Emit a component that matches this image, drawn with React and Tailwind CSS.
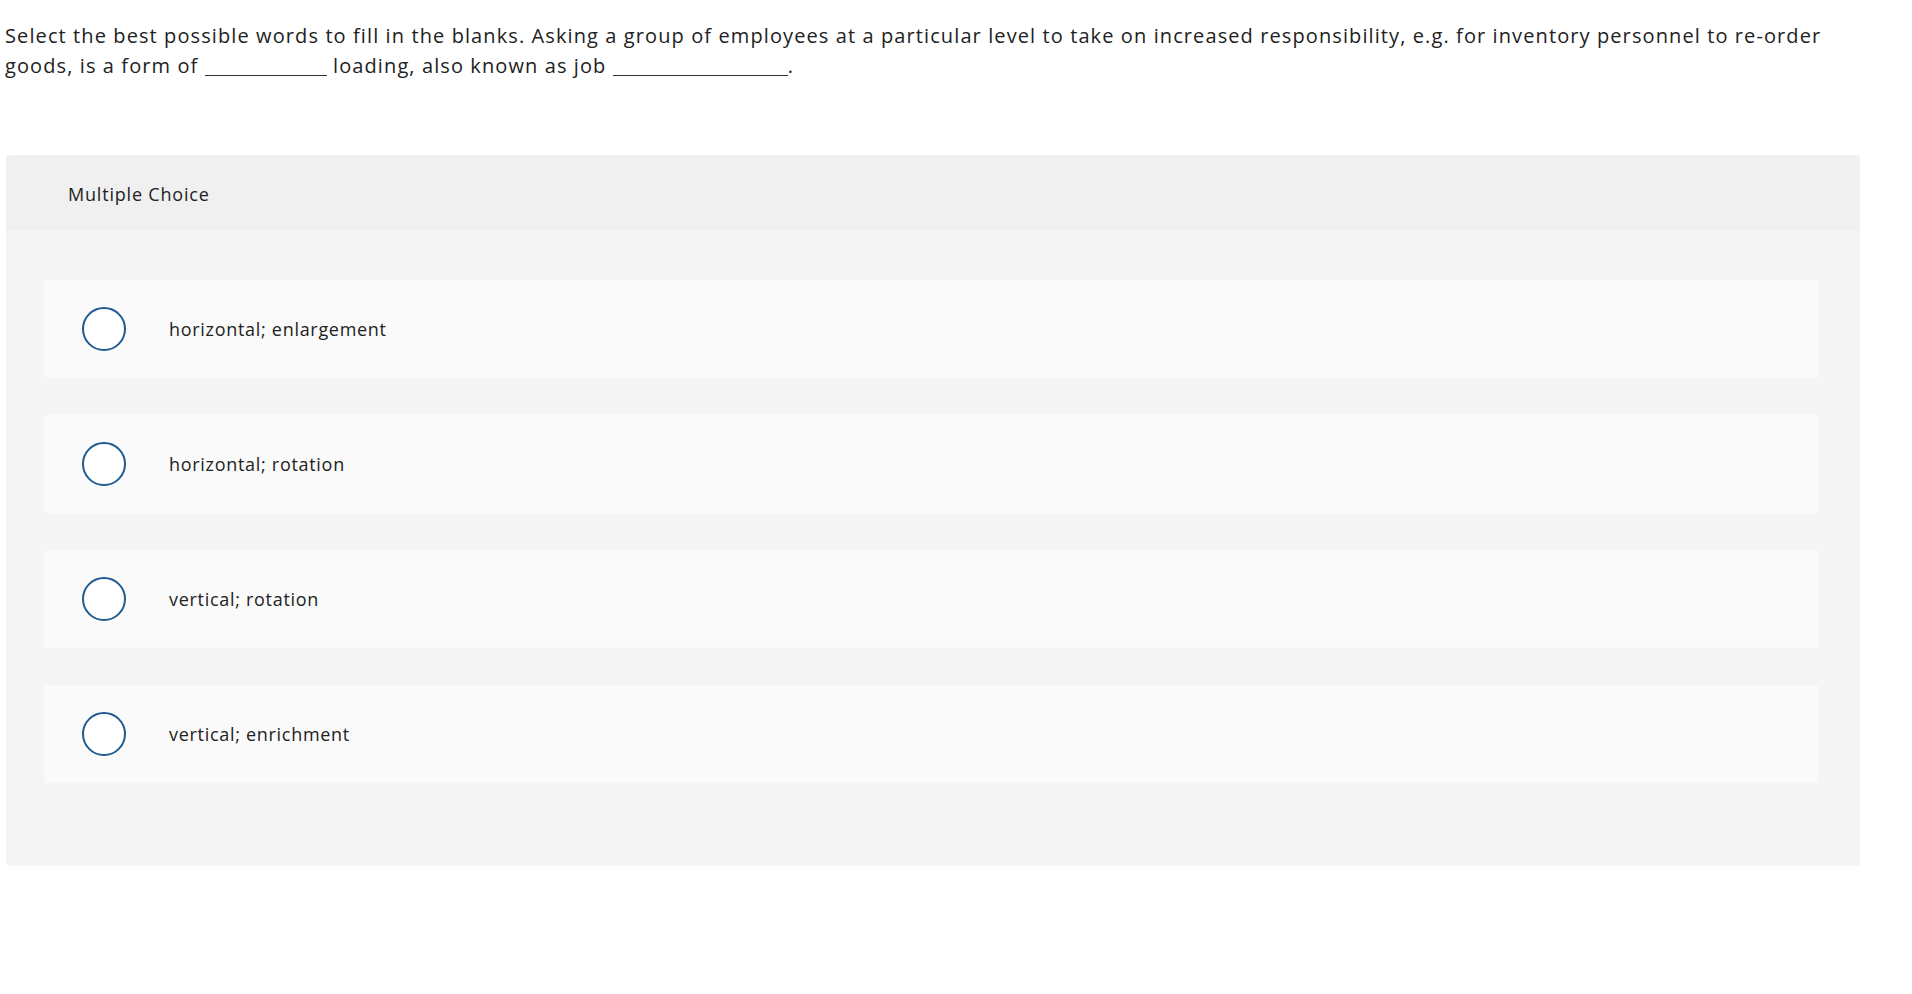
import React from 'react';

const options = [
  "horizontal; enlargement",
  "horizontal; rotation",
  "vertical; rotation",
  "vertical; enrichment",
];

const Blank = ({ width }) => (
  <span className={`inline-block h-px border-b border-[#333] align-[-3px] ${width}`} />
);

const App = () => {
  return (
    <div className="min-h-screen bg-white pt-[21px] pl-[5px] pr-[52px] text-[#222]" style={{ fontFamily: "'Open Sans', Lato, sans-serif" }}>
      <p className="text-[20px] leading-[30px] tracking-[1.1px]">
        Select the best possible words to fill in the blanks. Asking a group of employees at a particular level to take on increased responsibility, e.g. for inventory personnel to re-order goods, is a form of <Blank width="w-[122px]" /> loading, also known as job <Blank width="w-[175px]" />.
      </p>

      <div className="mt-[74px] ml-px rounded bg-[#f5f5f5]">
        <div className="flex h-[76px] items-center rounded-t bg-[#f0f0f0] pl-[62px] pt-[2px] text-[18px] tracking-[0.8px]">
          Multiple Choice
        </div>
        <div className="flex flex-col gap-[37px] pt-[49px] pb-[83px] pl-[38px] pr-[41px]">
          {options.map((opt) => (
            <div key={opt} className="flex h-[98px] items-center rounded bg-[#fafafa]">
              <span className="ml-[38px] h-[44px] w-[44px] shrink-0 rounded-full border-2 border-[#1f5a91] bg-white" />
              <span className="ml-[43px] text-[18px] tracking-[0.7px]">{opt}</span>
            </div>
          ))}
        </div>
      </div>
    </div>
  );
};

export default App;
